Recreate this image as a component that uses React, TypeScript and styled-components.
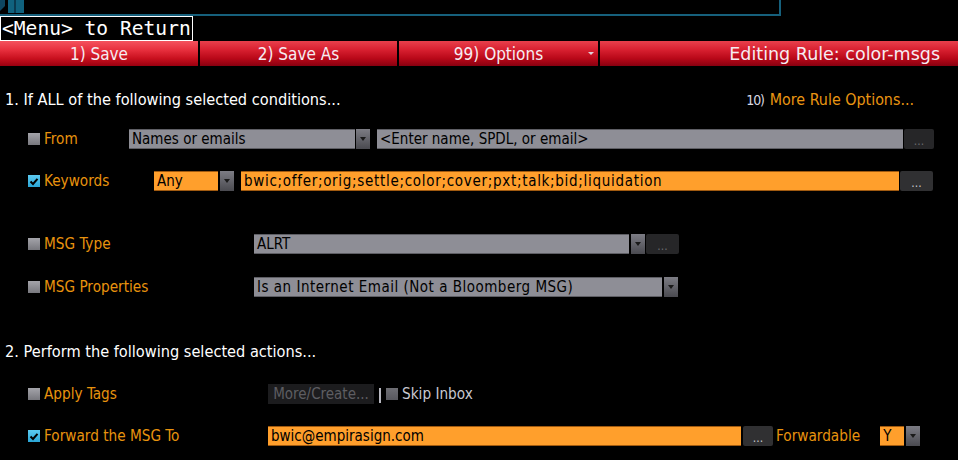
import React from "react";
import styled, { createGlobalStyle } from "styled-components";

const Global = createGlobalStyle`
  html, body { margin: 0; padding: 0; background: #000; }
  body { width: 958px; height: 460px; overflow: hidden; font-family: "DejaVu Sans Condensed", "DejaVu Sans", sans-serif; }
  * { box-sizing: border-box; }
`;

const Page = styled.div`
  width: 958px;
  height: 460px;
  background: #000;
  display: flex;
  flex-direction: column;
`;

const TopStrip = styled.div`
  width: 781px;
  height: 16px;
  border-bottom: 2px solid #16607c;
  border-right: 2px solid #16607c;
  display: flex;
  align-items: flex-start;
  svg { display: block; }
`;

const MenuBox = styled.div`
  width: 193px;
  height: 25px;
  border: 1px solid #fff;
  color: #fff;
  font-family: "DejaVu Sans Mono", "Liberation Mono", monospace;
  font-size: 19.6px;
  line-height: 23px;
  padding-left: 1px;
  white-space: nowrap;
  overflow: hidden;
`;

const ButtonBar = styled.div`
  display: flex;
  height: 25px;
  gap: 2px;
  background: #000;
`;

const RedButton = styled.div<{ $w: number; $bright?: boolean; $title?: boolean }>`
  width: ${(p) => p.$w}px;
  flex: ${(p) => (p.$w === 0 ? 1 : "none")};
  height: 25px;
  position: relative;
  display: flex;
  align-items: center;
  justify-content: ${(p) => (p.$title ? "flex-end" : "center")};
  padding-right: ${(p) => (p.$title ? "18px" : "0")};
  color: #f6ecf2;
  font-family: ${(p) => (p.$title ? '"DejaVu Sans", sans-serif' : '"DejaVu Sans Condensed", "DejaVu Sans", sans-serif')};
  font-size: ${(p) => (p.$title ? "17.5px" : "17px")};
  background: ${(p) =>
    p.$bright
      ? "linear-gradient(#f4525e 0%, #e8303e 35%, #c8101e 70%, #9a0010 100%)"
      : "linear-gradient(#e8404c 0%, #d82030 35%, #b80818 70%, #880010 100%)"};
  white-space: nowrap;
`;

const Caret = styled.span`
  position: absolute;
  right: 4px;
  top: 11px;
  width: 0;
  height: 0;
  border-left: 3px solid transparent;
  border-right: 3px solid transparent;
  border-top: 3px solid #e0d0d8;
`;

const Content = styled.div`
  display: flex;
  flex-direction: column;
`;

const HeadingRow = styled.div<{ $mt: number }>`
  margin-top: ${(p) => p.$mt}px;
  height: 18px;
  display: flex;
  align-items: center;
  justify-content: space-between;
  padding-left: 5px;
  padding-right: 44px;
`;

const Heading = styled.div`
  color: #fff;
  font-size: 16.2px;
  white-space: nowrap;
`;

const MoreLink = styled.div`
  color: #e99512;
  font-size: 15.9px;
  white-space: nowrap;
  span { color: #d8d8e0; font-size: 14px; letter-spacing: -1.2px; margin-right: 6px; }
`;

const Row = styled.div<{ $mt: number }>`
  margin-top: ${(p) => p.$mt}px;
  height: 20px;
  display: flex;
  align-items: center;
  padding-left: 28px;
`;

const LabelCell = styled.div<{ $w: number }>`
  width: ${(p) => p.$w}px;
  flex: none;
  display: flex;
  align-items: center;
  gap: 4px;
  height: 100%;
`;

const Check = styled.div<{ $on?: boolean; $muted?: boolean }>`
  width: 12px;
  height: 12px;
  flex: none;
  background: ${(p) =>
    p.$on
      ? "linear-gradient(#5ccaf0, #2aa6d6)"
      : p.$muted
      ? "linear-gradient(#6e6e74, #58585e)"
      : "linear-gradient(#a4a4aa, #78787e)"};
  display: flex;
  align-items: center;
  justify-content: center;
`;

const Label = styled.div<{ $c?: string; $ml?: number }>`
  color: ${(p) => p.$c || "#e8930e"};
  font-size: 15.2px;
  white-space: nowrap;
  margin-top: -1px;
  margin-left: ${(p) => p.$ml || 0}px;
`;

const Field = styled.div<{ $w: number; $tone: "grey" | "orange"; $ml?: number; $ls?: number }>`
  width: ${(p) => p.$w}px;
  margin-left: ${(p) => p.$ml || 0}px;
  flex: none;
  height: 20px;
  background: ${(p) => (p.$tone === "grey" ? "#8e8e96" : "#ff9f2c")};
  border-top: 1px solid ${(p) => (p.$tone === "grey" ? "#5e5e64" : "#a05a10")};
  border-bottom: 1px solid ${(p) => (p.$tone === "grey" ? "#5e5e64" : "#a05a10")};
  color: #000;
  font-size: 15px;
  line-height: 18px;
  letter-spacing: ${(p) => p.$ls || 0}px;
  padding-left: 3px;
  white-space: nowrap;
  overflow: hidden;
`;

const Arrow = styled.div<{ $ml: number }>`
  width: 14px;
  height: 20px;
  margin-left: ${(p) => p.$ml}px;
  flex: none;
  background: linear-gradient(#7c7c84, #4a4a50);
  display: flex;
  align-items: center;
  justify-content: center;
  &::after {
    content: "";
    border-left: 3px solid transparent;
    border-right: 3px solid transparent;
    border-top: 4px solid #1a1a1a;
  }
`;

const Dots = styled.div<{ $w: number; $ml: number; $dim?: boolean }>`
  width: ${(p) => p.$w}px;
  height: 20px;
  margin-left: ${(p) => p.$ml}px;
  flex: none;
  background: ${(p) => (p.$dim ? "#262628" : "#303032")};
  border-radius: 2px;
  color: ${(p) => (p.$dim ? "#6a6a6e" : "#c8c8cc")};
  font-size: 12px;
  display: flex;
  align-items: flex-end;
  justify-content: center;
  padding-bottom: 3px;
  line-height: 10px;
`;

const DarkButton = styled.div`
  width: 106px;
  height: 20px;
  background: #1c1c1e;
  color: #5e5e62;
  font-size: 15px;
  display: flex;
  align-items: center;
  justify-content: center;
  flex: none;
`;

const Pipe = styled.div`
  width: 2px;
  height: 15px;
  background: #b8b8c0;
  margin: 2px 5px 0 5px;
  flex: none;
`;

const Gap = styled.div<{ $w: number }>`
  width: ${(p) => p.$w}px;
  flex: none;
`;

const CheckMark = () => (
  <svg width="10" height="9" viewBox="0 0 10 9">
    <path d="M1.5 4.5 L4 7 L8.5 1.8" stroke="#000" strokeWidth="2" fill="none" />
  </svg>
);

const TopIcon = () => (
  <svg width="26" height="13" viewBox="0 0 26 13">
    <path d="M0 0 L5 0 L5 6 L0 11 Z" fill="#0e4660" />
    <rect x="8" y="0" width="16" height="13" fill="#10627e" />
    <rect x="14" y="0" width="2" height="13" fill="#0a3a50" />
  </svg>
);

export default function App() {
  return (
    <Page>
      <Global />
      <TopStrip>
        <TopIcon />
      </TopStrip>
      <MenuBox>&lt;Menu&gt; to Return</MenuBox>
      <ButtonBar>
        <RedButton $w={198} $bright>1) Save</RedButton>
        <RedButton $w={197}>2) Save As</RedButton>
        <RedButton $w={199}>
          99) Options
          <Caret />
        </RedButton>
        <RedButton $w={0} $title>Editing Rule: color-msgs</RedButton>
      </ButtonBar>
      <Content>
        <HeadingRow $mt={24}>
          <Heading>1. If ALL of the following selected conditions...</Heading>
          <MoreLink>
            <span>10)</span>More Rule Options...
          </MoreLink>
        </HeadingRow>
        <Row $mt={21}>
          <LabelCell $w={101}>
            <Check />
            <Label>From</Label>
          </LabelCell>
          <Field $w={226} $tone="grey">Names or emails</Field>
          <Arrow $ml={1} />
          <Field $w={526} $tone="grey" $ml={7}>
            &lt;Enter name, SPDL, or email&gt;
          </Field>
          <Dots $w={30} $ml={1} $dim>...</Dots>
        </Row>
        <Row $mt={22}>
          <LabelCell $w={126}>
            <Check $on>
              <CheckMark />
            </Check>
            <Label>Keywords</Label>
          </LabelCell>
          <Field $w={64} $tone="orange">Any</Field>
          <Arrow $ml={2} />
          <Field $w={658} $tone="orange" $ml={7} $ls={0.7}>
            bwic;offer;orig;settle;color;cover;pxt;talk;bid;liquidation
          </Field>
          <Dots $w={33} $ml={1}>...</Dots>
        </Row>
        <Row $mt={43}>
          <LabelCell $w={226}>
            <Check />
            <Label>MSG Type</Label>
          </LabelCell>
          <Field $w={375} $tone="grey">ALRT</Field>
          <Arrow $ml={2} />
          <Dots $w={33} $ml={1} $dim>...</Dots>
        </Row>
        <Row $mt={23}>
          <LabelCell $w={226}>
            <Check />
            <Label>MSG Properties</Label>
          </LabelCell>
          <Field $w={408} $tone="grey" $ls={0.5}>Is an Internet Email (Not a Bloomberg MSG)</Field>
          <Arrow $ml={2} />
        </Row>
        <HeadingRow $mt={45}>
          <Heading>2. Perform the following selected actions...</Heading>
        </HeadingRow>
        <Row $mt={24}>
          <LabelCell $w={240}>
            <Check />
            <Label>Apply Tags</Label>
          </LabelCell>
          <DarkButton>More/Create...</DarkButton>
          <Pipe />
          <Check $muted />
          <Label $c="#c8c8d0" $ml={4}>Skip Inbox</Label>
        </Row>
        <Row $mt={22}>
          <LabelCell $w={240}>
            <Check $on>
              <CheckMark />
            </Check>
            <Label>Forward the MSG To</Label>
          </LabelCell>
          <Field $w={473} $tone="orange">bwic@empirasign.com</Field>
          <Dots $w={30} $ml={2}>...</Dots>
          <Gap $w={3} />
          <Label>Forwardable</Label>
          <Gap $w={20} />
          <Field $w={24} $tone="orange">Y</Field>
          <Arrow $ml={2} />
        </Row>
      </Content>
    </Page>
  );
}
